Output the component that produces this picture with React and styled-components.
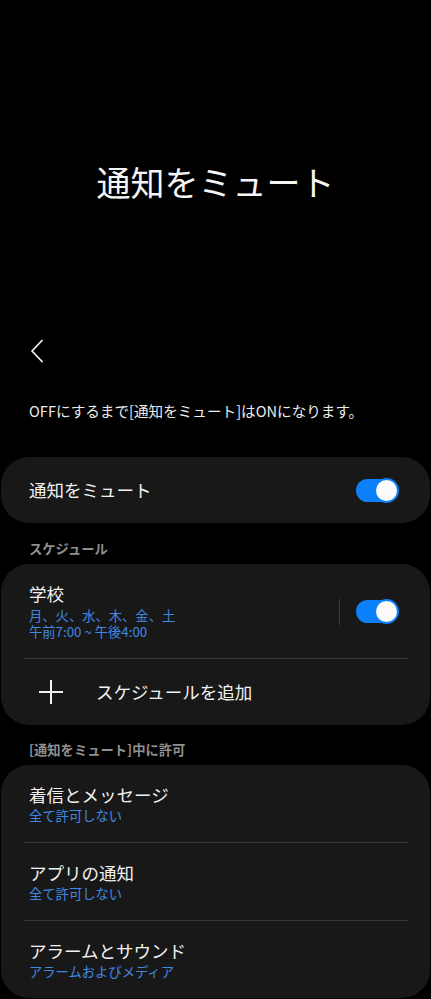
import React from "react";
import styled, { createGlobalStyle } from "styled-components";

const GlobalStyle = createGlobalStyle`
  html, body {
    margin: 0;
    padding: 0;
    background: #000;
  }
  body {
    font-family: "Noto Sans CJK JP", "Noto Sans", sans-serif;
    color: #f2f2f2;
    -webkit-font-smoothing: antialiased;
  }
`;

const Page = styled.div`
  width: 431px;
  min-height: 999px;
  background: #000;
  display: flex;
  flex-direction: column;
`;

const Hero = styled.header`
  padding-top: 161px;
  display: flex;
  justify-content: center;
`;

const Title = styled.h1`
  margin: 0;
  font-size: 34px;
  line-height: 42px;
  font-weight: 400;
  color: #f5f5f5;
`;

const BackButton = styled.button`
  margin: 135px 0 0 24px;
  width: 26px;
  height: 26px;
  padding: 0;
  border: none;
  background: none;
  display: flex;
  align-items: center;
  justify-content: center;
  svg {
    display: block;
  }
`;

const Info = styled.p`
  margin: 37px 0 0 29px;
  font-size: 14.6px;
  line-height: 20px;
  color: #ececec;
`;

const Card = styled.section`
  margin: ${(p) => p.$top}px 1px 0;
  background: #181818;
  border-radius: 28px;
  display: flex;
  flex-direction: column;
`;

const SectionLabel = styled.h2`
  margin: ${(p) => p.$top}px 0 0 29px;
  font-size: 13.3px;
  line-height: 18px;
  font-weight: 700;
  color: #8f8f8f;
`;

const Row = styled.div`
  display: flex;
  align-items: center;
  padding: ${(p) => (p.$simple ? "0 32px 0 28px" : "19px 32px 18px 28px")};
  min-height: ${(p) => (p.$simple ? "66px" : "auto")};
  box-sizing: border-box;
`;

const RowText = styled.div`
  flex: 1;
  display: flex;
  flex-direction: column;
`;

const RowTitle = styled.div`
  font-size: 17.5px;
  line-height: 22px;
  color: #f2f2f2;
`;

const RowSub = styled.div`
  font-size: 13.3px;
  line-height: 16px;
  color: #4089e4;
  ${RowTitle} + & {
    margin-top: ${(p) => p.$gap ?? 2}px;
  }
`;

const Divider = styled.div`
  height: 1px;
  margin: 0 22px 0 23px;
  background: #363636;
`;

const VSep = styled.div`
  width: 1px;
  height: 26px;
  background: #3a3a3a;
  margin-right: 16px;
`;

const Track = styled.div`
  position: relative;
  width: 42px;
  height: 23px;
  border-radius: 12px;
  background: #0b80f8;
`;

const Thumb = styled.div`
  position: absolute;
  right: -1px;
  top: -1px;
  width: 21px;
  height: 21px;
  border-radius: 50%;
  background: #fbfbfb;
  border: 2px solid #0b80f8;
`;

const AddIcon = styled.div`
  width: 26px;
  display: flex;
  margin: 0 32px 0 9px;
`;

const Toggle = () => (
  <Track>
    <Thumb />
  </Track>
);

const permissions = [
  { title: "着信とメッセージ", sub: "全て許可しない" },
  { title: "アプリの通知", sub: "全て許可しない" },
  { title: "アラームとサウンド", sub: "アラームおよびメディア" },
];

export default function App() {
  return (
    <Page>
      <GlobalStyle />
      <Hero>
        <Title>通知をミュート</Title>
      </Hero>
      <BackButton aria-label="戻る">
        <svg width="16" height="24" viewBox="0 0 16 24" fill="none">
          <path d="M13 1.5 L3 12 L13 22.5" stroke="#f2f2f2" strokeWidth="1.8" strokeLinecap="round" strokeLinejoin="round" />
        </svg>
      </BackButton>
      <Info>OFFにするまで[通知をミュート]はONになります。</Info>

      <Card $top={36}>
        <Row $simple>
          <RowText>
            <RowTitle>通知をミュート</RowTitle>
          </RowText>
          <Toggle />
        </Row>
      </Card>

      <SectionLabel $top={17}>スケジュール</SectionLabel>
      <Card $top={6}>
        <Row>
          <RowText>
            <RowTitle>学校</RowTitle>
            <RowSub $gap={3}>月、火、水、木、金、土</RowSub>
            <RowSub>午前7:00 ~ 午後4:00</RowSub>
          </RowText>
          <VSep />
          <Toggle />
        </Row>
        <Divider />
        <Row $simple>
          <AddIcon>
            <svg width="26" height="26" viewBox="0 0 26 26">
              <path d="M13 1 V25 M1 13 H25" stroke="#f2f2f2" strokeWidth="2" />
            </svg>
          </AddIcon>
          <RowTitle>スケジュールを追加</RowTitle>
        </Row>
      </Card>

      <SectionLabel $top={16}>[通知をミュート]中に許可</SectionLabel>
      <Card $top={6}>
        {permissions.map((p, i) => (
          <React.Fragment key={p.title}>
            {i > 0 && <Divider />}
            <Row>
              <RowText>
                <RowTitle>{p.title}</RowTitle>
                <RowSub>{p.sub}</RowSub>
              </RowText>
            </Row>
          </React.Fragment>
        ))}
      </Card>
    </Page>
  );
}
